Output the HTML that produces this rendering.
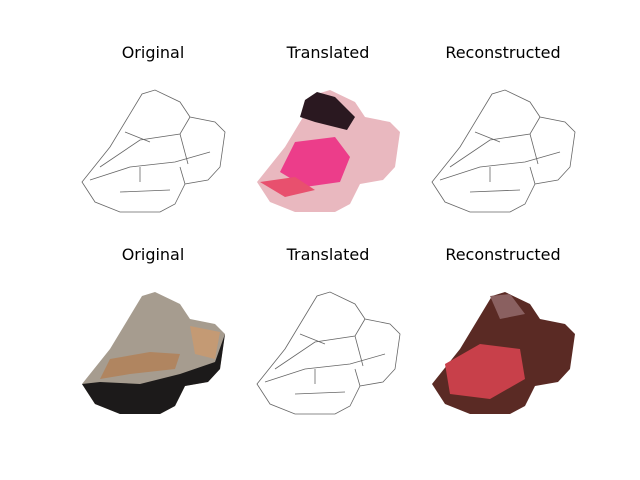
<!DOCTYPE html>
<html><head><meta charset="utf-8"><style>
body{margin:0;background:#fff;width:640px;height:480px;overflow:hidden;font-family:"DejaVu Sans","Liberation Sans",sans-serif}
.t{position:absolute;font-size:16px;color:#000;transform:translateX(-50%);white-space:nowrap}
svg{position:absolute;left:0;top:0}
</style></head><body>
<div class="t" style="left:153px;top:43px">Original</div>
<div class="t" style="left:328px;top:43px">Translated</div>
<div class="t" style="left:503px;top:43px">Reconstructed</div>
<div class="t" style="left:153px;top:245px">Original</div>
<div class="t" style="left:328px;top:245px">Translated</div>
<div class="t" style="left:503px;top:245px">Reconstructed</div>
<svg width="640" height="480">
<defs>
<path id="s" d="M2,110 L30,75 L62,22 L75,18 L100,30 L110,45 L135,50 L145,60 L140,95 L128,108 L105,112 L95,132 L80,140 L40,140 L15,130 Z"/>
<g id="sk" fill="none" stroke="#666" stroke-width="0.8">
<use href="#s"/>
<path d="M20,95 L60,68 L100,62 L110,45"/>
<path d="M10,108 L50,95 L95,90 L130,80"/>
<path d="M45,60 L70,70 M100,62 L108,92 M60,95 L60,110"/>
<path d="M105,112 L100,95 M40,120 L90,118"/>
</g>
</defs>
<!-- row1 -->
<g transform="translate(80,72)"><use href="#sk"/></g>
<g transform="translate(255,72)">
<use href="#s" fill="#e9b8bf"/>
<path d="M50,28 L62,20 L80,25 L100,45 L92,58 L60,50 L45,45 Z" fill="#2a1820"/>
<path d="M40,70 L80,65 L95,85 L85,110 L50,115 L25,100 Z" fill="#ec3d8a"/>
<path d="M5,110 L40,105 L60,118 L30,125 Z" fill="#e8506e"/>
</g>
<g transform="translate(430,72)"><use href="#sk"/></g>
<!-- row2 -->
<g transform="translate(80,274)">
<use href="#s" fill="#a69c8f"/>
<path d="M2,110 L15,130 L40,140 L80,140 L95,132 L105,112 L128,108 L140,95 L145,60 L135,88 L100,100 L60,110 L20,108 Z" fill="#1c1a1a"/>
<path d="M30,85 L70,78 L100,80 L95,95 L50,100 L20,105 Z" fill="#b08560"/>
<path d="M110,52 L140,58 L135,85 L115,80 Z" fill="#c49a74"/>
</g>
<g transform="translate(255,274)"><use href="#sk"/></g>
<g transform="translate(430,274)">
<use href="#s" fill="#5a2a24"/>
<path d="M15,90 L50,70 L90,75 L95,105 L60,125 L20,120 Z" fill="#c8404a"/>
<path d="M60,22 L80,20 L95,40 L70,45 Z" fill="#8a6060"/>
</g>
</svg>
</body></html>
